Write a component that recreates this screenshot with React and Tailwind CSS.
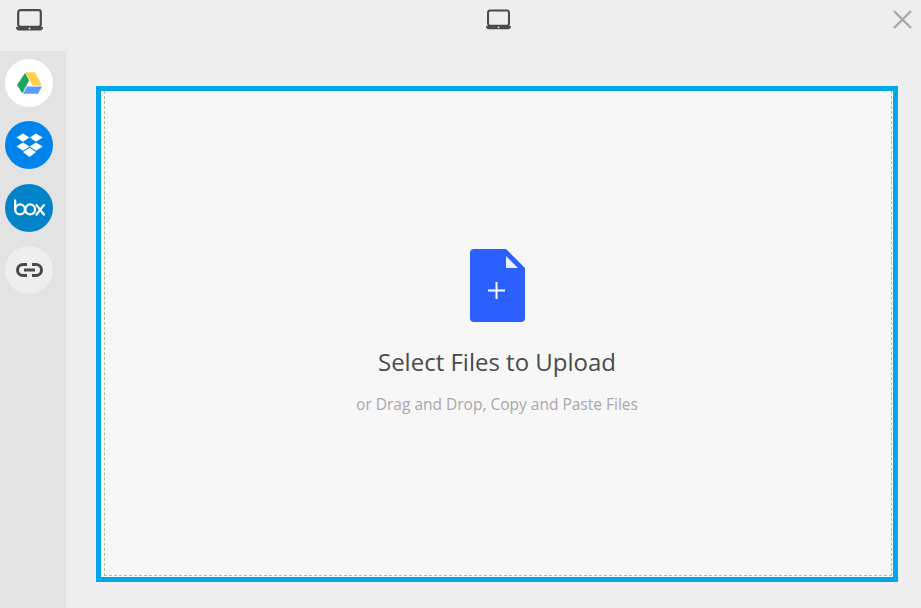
import React from 'react'

function Laptop({ className }) {
    return (
        <svg className={className} viewBox="0 0 27 22" fill="none">
            <rect x="2.2" y="1.2" width="22.6" height="16.6" rx="2.2" stroke="#4a4a4a" strokeWidth="2.2" />
            <path d="M0 18h27c0 2.2-1.2 3.5-3 3.5H3c-1.8 0-3-1.3-3-3.5z" fill="#4a4a4a" />
            <circle cx="13.5" cy="19.5" r="1" fill="#eeeeee" />
        </svg>
    )
}

function DriveLogo() {
    return (
        <svg className="w-[25px] h-[22px]" viewBox="0 0 25 22">
            <path d="M8.3 0.3h9.6l7.1 13.2h-9.4z" fill="#ffcf4a" />
            <path d="M8 1l4.2 7.2L5.4 21.6 0 13z" fill="#1fa463" />
            <path d="M6.2 21.8l3.8-7.2h15l-3.9 7.2z" fill="#5a9bfb" />
        </svg>
    )
}

function DropboxLogo() {
    return (
        <svg className="w-[27px] h-[25px]" viewBox="0 0 27 25" fill="#ffffff">
            <path d="M7 0.5l6.4 4.1L7 8.8 0.5 4.6z" />
            <path d="M20 0.5l6.5 4.1L20 8.8l-6.4-4.2z" />
            <path d="M7 9.4l6.4 4.2L7 17.7 0.5 13.6z" />
            <path d="M20 9.4l6.5 4.2-6.5 4.1-6.4-4.1z" />
            <path d="M13.5 14.8l6.5 4.2-6.5 5-6.5-5z" />
        </svg>
    )
}

function BoxLogo() {
    return (
        <svg className="w-[31px] h-[17px]" viewBox="0 0 33 17" fill="none" stroke="#ffffff" strokeWidth="2.4">
            <path d="M1.2 0v10.5" />
            <circle cx="6.4" cy="10.5" r="5.2" />
            <circle cx="17.2" cy="10.5" r="5.2" />
            <path d="M24 6l7.8 10M31.8 6L24 16" strokeLinecap="round" />
        </svg>
    )
}

function LinkLogo() {
    return (
        <svg className="w-[27px] h-[14px]" viewBox="0 0 27 14" fill="none" stroke="#4a4a4a" strokeWidth="3">
            <path d="M11 1.5H7a5.5 5.5 0 0 0 0 11h4" />
            <path d="M16 1.5h4a5.5 5.5 0 0 1 0 11h-4" />
            <path d="M8 7h11" />
        </svg>
    )
}

function SourceButton(props) {
    return (
        <div className={"w-12 h-12 rounded-full flex items-center justify-center " + props.color}>
            {props.children}
        </div>
    )
}

function FileIcon() {
    return (
        <svg className="w-[55px] h-[73px]" viewBox="0 0 55 73">
            <path d="M4 0h32l19 19v50a4 4 0 0 1-4 4H4a4 4 0 0 1-4-4V4a4 4 0 0 1 4-4z" fill="#2b60ff" />
            <path d="M36 7l12 12H36z" fill="#e8eeff" />
            <path d="M26.5 33v17M18 41.5h17" stroke="#ffffff" strokeWidth="2" />
        </svg>
    )
}

export default function App() {
    return (
        <div className="w-[921px] h-[608px] flex flex-col bg-[#eeeeee] overflow-hidden font-['Open_Sans',sans-serif]">
            <div className="h-[51px] flex items-start relative shrink-0">
                <div className="w-[66px] pt-[9px] flex justify-center">
                    <Laptop className="w-[27px] h-[22px] ml-[-7px]" />
                </div>
                <div className="flex-1 pt-[9px] pl-[33px] pr-[23px] flex justify-center">
                    <Laptop className="w-[25px] h-[21px]" />
                </div>
                <svg className="absolute top-[10px] right-[9px] w-[19px] h-[19px]" viewBox="0 0 19 19" stroke="#a9a9a9" strokeWidth="2.4">
                    <path d="M1 1l17 17M18 1L1 18" />
                </svg>
            </div>
            <div className="flex-1 flex min-h-0">
                <div className="w-[66px] bg-[#e3e3e3] pt-2 pl-[5px] flex flex-col gap-[14.4px] shrink-0">
                    <SourceButton color="bg-white"><DriveLogo /></SourceButton>
                    <SourceButton color="bg-[#0084ec]"><DropboxLogo /></SourceButton>
                    <SourceButton color="bg-[#0083c9]"><BoxLogo /></SourceButton>
                    <SourceButton color="bg-[#eeeeee]"><LinkLogo /></SourceButton>
                </div>
                <div className="flex-1 pt-[35px] pl-[30px] pr-[23px] pb-[26px]">
                    <div className="h-full border-[5px] border-[#00a6e8] bg-[#f7f7f7] pl-[3px] pr-[1px] pb-[1px]">
                        <div className="h-full border border-t-0 border-dashed border-[#b8b8b8] flex flex-col items-center pt-[158px] pr-[2px]">
                            <FileIcon />
                            <div className="mt-[24px] text-[24px] leading-[32px] text-[#4a4a4a]">Select Files to Upload</div>
                            <div className="mt-[16px] text-[15.5px] leading-[20px] text-[#a8a8a8]">or Drag and Drop, Copy and Paste Files</div>
                        </div>
                    </div>
                </div>
            </div>
        </div>
    )
}
